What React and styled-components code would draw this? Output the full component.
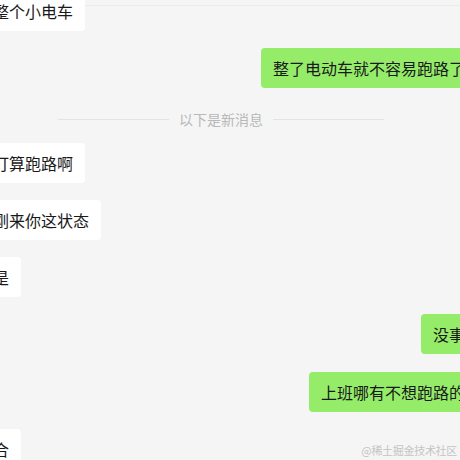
import React from "react";
import styled, { createGlobalStyle } from "styled-components";

const GlobalStyle = createGlobalStyle`
  html, body {
    margin: 0;
    padding: 0;
    background: #f5f5f5;
  }
  body {
    font-family: "Noto Sans CJK SC", "Noto Sans", sans-serif;
  }
`;

const Page = styled.div`
  position: relative;
  width: 460px;
  height: 460px;
  overflow: hidden;
  background: linear-gradient(#ebebeb, #ebebeb) 0 5px / 100% 1px no-repeat,
    #f5f5f5;
`;

const Chat = styled.div`
  display: flex;
  flex-direction: column;
  width: 496px;
  margin-left: -19px;
  margin-top: -9px;
`;

const Row = styled.div`
  display: flex;
  justify-content: ${(props) => (props.mine ? "flex-end" : "flex-start")};
  margin-top: ${(props) => props.space ?? 17.25}px;
`;

const Bubble = styled.div`
  box-sizing: border-box;
  height: 40px;
  padding: 8px 12px;
  border-radius: 4px;
  font-size: 16px;
  line-height: 24px;
  white-space: nowrap;
  color: #191919;
  background: ${(props) => (props.mine ? "#95ec69" : "#ffffff")};
`;

const Divider = styled.div`
  display: flex;
  align-items: center;
  justify-content: center;
  gap: 10px;
  height: 20px;
  margin: 21px 0 -4px 0;
  padding-left: 19px;
  width: 442px;
  font-size: 14px;
  color: #b8b8b8;

  &::before,
  &::after {
    content: "";
    width: 111px;
    height: 1px;
    background: #e3e3e3;
  }
`;

const Watermark = styled.div`
  position: absolute;
  right: 3px;
  bottom: 2px;
  font-size: 11px;
  letter-spacing: -0.3px;
  color: #c4c4c4;
  font-family: "Noto Sans CJK SC", serif;
`;

const messages = [
  { text: "整个小电车", mine: false, space: 0 },
  { text: "整了电动车就不容易跑路了", mine: true },
  { divider: "以下是新消息" },
  { text: "打算跑路啊", mine: false },
  { text: "刚来你这状态", mine: false },
  { text: "是", mine: false },
  { text: "没事", mine: true },
  { text: "上班哪有不想跑路的", mine: true },
  { text: "合", mine: false },
];

export default function App() {
  return (
    <>
      <GlobalStyle />
      <Page>
        <Chat>
          {messages.map((m, i) =>
            m.divider ? (
              <Divider key={i}>{m.divider}</Divider>
            ) : (
              <Row key={i} mine={m.mine} space={m.space}>
                <Bubble mine={m.mine}>{m.text}</Bubble>
              </Row>
            )
          )}
        </Chat>
        <Watermark>@稀土掘金技术社区</Watermark>
      </Page>
    </>
  );
}
